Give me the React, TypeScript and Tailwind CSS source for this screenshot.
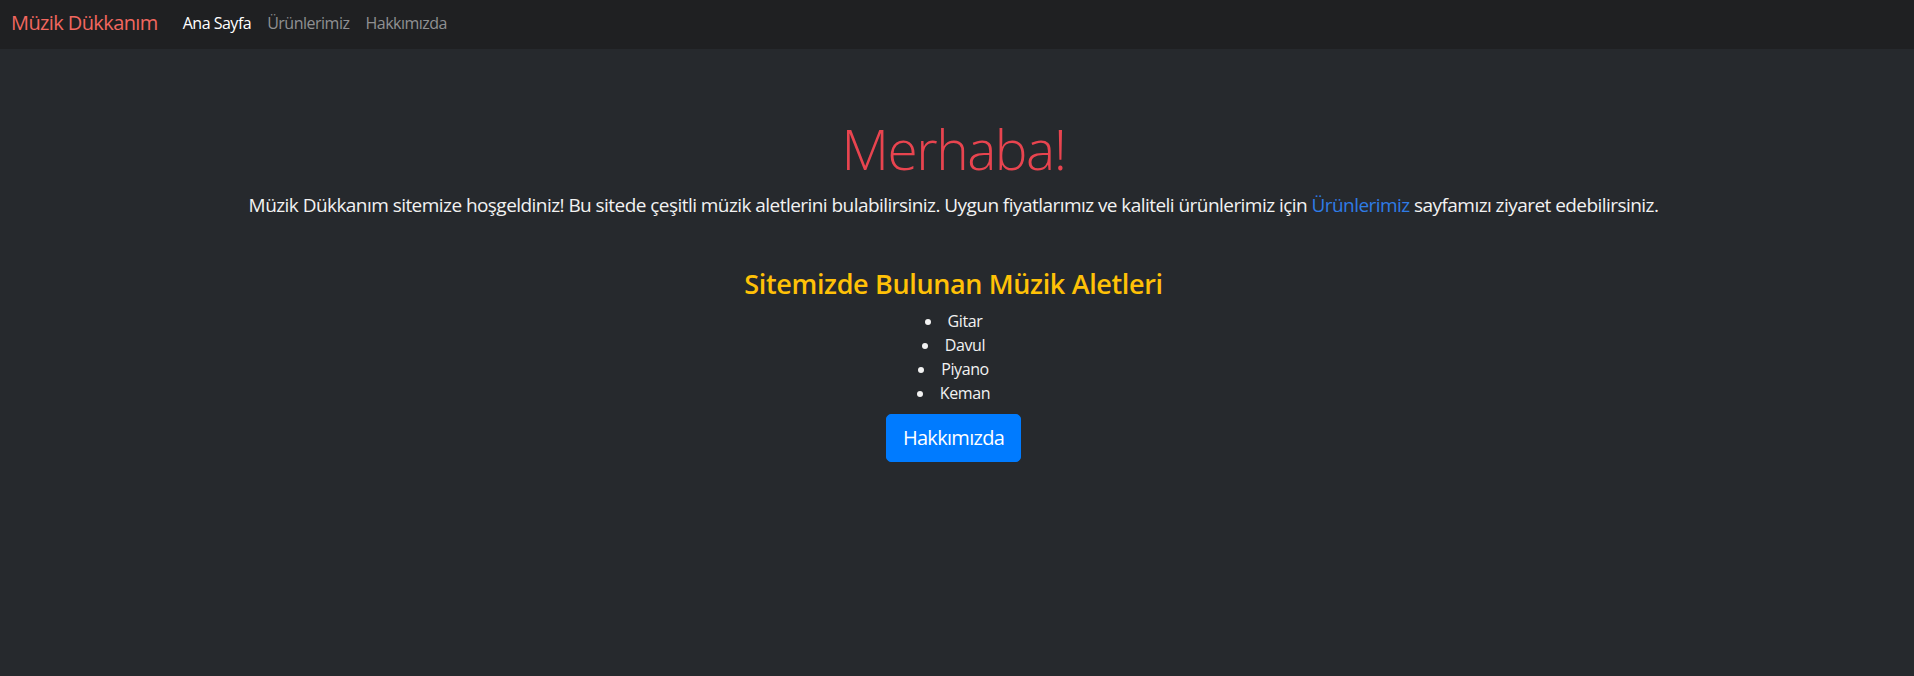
const navLinks = [
  { label: "Ana Sayfa", active: true },
  { label: "Ürünlerimiz", active: false },
  { label: "Hakkımızda", active: false },
];

const instruments = ["Gitar", "Davul", "Piyano", "Keman"];

export default function App() {
  return (
    <div
      className="min-h-[676px] bg-[#26292d] text-[#f2f2f2]"
      style={{ fontFamily: '"Open Sans", "Noto Sans", sans-serif' }}
    >
      {/* Navbar */}
      <nav className="h-[49px] bg-[#1f2022] flex items-center px-[11px] pb-[4px]">
        <a href="#" className="text-[20px] text-[#f2675f] mr-[17px] tracking-[-0.6px]">
          Müzik Dükkanım
        </a>
        <ul className="flex">
          {navLinks.map((link) => (
            <li key={link.label}>
              <a
                href="#"
                className={`px-2 text-[16px] tracking-[-0.5px] ${
                  link.active ? "text-white" : "text-[#8f9092]"
                }`}
              >
                {link.label}
              </a>
            </li>
          ))}
        </ul>
      </nav>

      {/* Hero */}
      <section className="pt-[66px] pr-[7px] text-center">
        <h1 className="text-[55px] font-light leading-[67px] text-[#e8444f] mb-[8px] tracking-[-1.5px]">
          Merhaba!
        </h1>
        <p className="text-[19px] leading-[30px] tracking-[-0.55px]">
          Müzik Dükkanım sitemize hoşgeldiniz! Bu sitede çeşitli müzik aletlerini bulabilirsiniz. Uygun
          fiyatlarımız ve kaliteli ürünlerimiz için{" "}
          <a href="#" className="text-[#2f7ce6]">
            Ürünlerimiz
          </a>{" "}
          sayfamızı ziyaret edebilirsiniz.
        </p>
      </section>

      {/* Instruments */}
      <section className="mt-[47px] pr-[7px] text-center">
        <h3 className="text-[27px] font-semibold leading-[34px] text-[#ffc107] mb-2 tracking-[-0.35px]">
          Sitemizde Bulunan Müzik Aletleri
        </h3>
        <ul className="list-disc list-inside text-[16px] leading-[24px] tracking-[-0.4px]">
          {instruments.map((item) => (
            <li key={item}>{item}</li>
          ))}
        </ul>
        <button className="mt-[9px] h-[48px] px-4 text-[20px] text-white bg-[#007bff] border border-[#007bff] rounded-[5px] tracking-[-0.7px]">
          Hakkımızda
        </button>
      </section>
    </div>
  );
}
